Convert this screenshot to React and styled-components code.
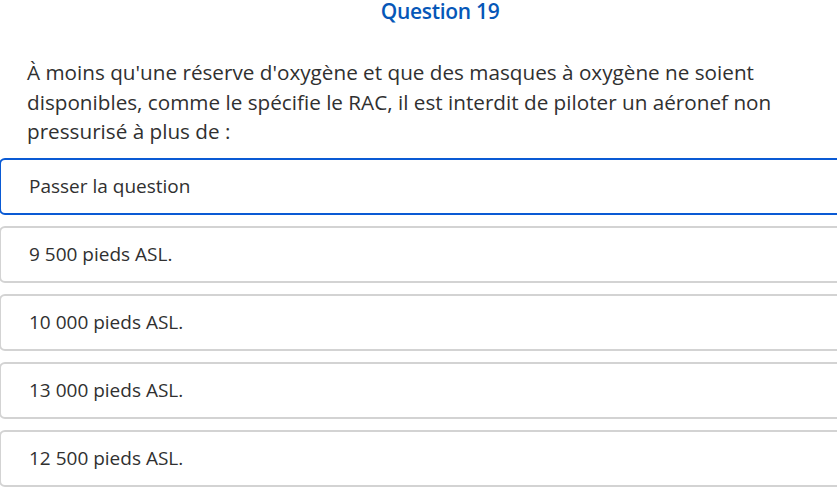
import React from "react";
import styled, { createGlobalStyle } from "styled-components";

const Global = createGlobalStyle`
  html, body { margin: 0; padding: 0; background: #fff; overflow: hidden; }
  body { font-family: "Open Sans", "Noto Sans", sans-serif; }
`;

const Page = styled.div`
  width: 882px;
  margin-left: -1px;
  display: flex;
  flex-direction: column;
`;

const Title = styled.h2`
  margin: 0;
  align-self: center;
  text-align: center;
  font-size: 21px;
  font-weight: 600;
  line-height: 22px;
  color: #0657b8;
  letter-spacing: -0.3px;
`;

const Prompt = styled.p`
  margin: 36px 0 0 0;
  padding: 0 28px;
  font-size: 20.7px;
  line-height: 29.5px;
  color: #303030;
  width: 790px;
`;

const Options = styled.div`
  margin-top: 11px;
  display: flex;
  flex-direction: column;
  gap: 11px;
`;

const Option = styled.button`
  display: flex;
  align-items: center;
  height: 57px;
  box-sizing: border-box;
  padding: 0 28px;
  border: 2px solid ${(p) => (p.$active ? "#0a5ad4" : "#d3d3d3")};
  border-radius: 6px;
  background: #fff;
  font-family: inherit;
  font-size: 19px;
  color: #303030;
  text-align: left;
  cursor: pointer;
`;

const options = [
  "Passer la question",
  "9 500 pieds ASL.",
  "10 000 pieds ASL.",
  "13 000 pieds ASL.",
  "12 500 pieds ASL.",
];

export default function App() {
  return (
    <>
      <Global />
      <Page>
        <Title>Question 19</Title>
        <Prompt>
          À moins qu'une réserve d'oxygène et que des masques à oxygène ne soient
          disponibles, comme le spécifie le RAC, il est interdit de piloter un aéronef non
          pressurisé à plus de :
        </Prompt>
        <Options>
          {options.map((o, i) => (
            <Option key={o} $active={i === 0}>
              {o}
            </Option>
          ))}
        </Options>
      </Page>
    </>
  );
}
